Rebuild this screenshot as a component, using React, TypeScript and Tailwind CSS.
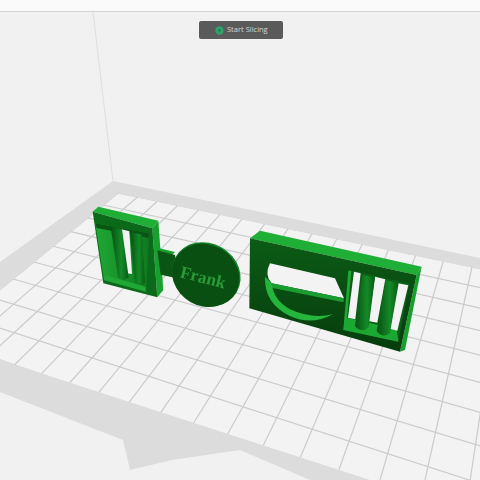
import { useMemo } from 'react';

type Pt = [number, number];

// plate corners on screen, used to work out the grid perspective
const CORNERS: [Pt, Pt, Pt, Pt] = [
  [118, 193],
  [472, 267],
  [419.5, 505],
  [-60, 339],
];

function homography([p0, p1, p2, p3]: [Pt, Pt, Pt, Pt]) {
  const dx1 = p1[0] - p2[0];
  const dx2 = p3[0] - p2[0];
  const sx = p0[0] - p1[0] + p2[0] - p3[0];
  const dy1 = p1[1] - p2[1];
  const dy2 = p3[1] - p2[1];
  const sy = p0[1] - p1[1] + p2[1] - p3[1];
  const det = dx1 * dy2 - dx2 * dy1;
  const g = (sx * dy2 - dx2 * sy) / det;
  const h = (dx1 * sy - sx * dy1) / det;
  const a = p1[0] - p0[0] + g * p1[0];
  const b = p3[0] - p0[0] + h * p3[0];
  const d = p1[1] - p0[1] + g * p1[1];
  const e = p3[1] - p0[1] + h * p3[1];
  return (u: number, v: number): Pt => {
    const w = g * u + h * v + 1;
    return [(a * u + b * v + p0[0]) / w, (d * u + e * v + p0[1]) / w];
  };
}

function Plate() {
  const lines = useMemo(() => {
    const map = homography(CORNERS);
    const out: [Pt, Pt][] = [];
    for (let i = 0; i <= 19; i++) out.push([map(i / 15, 0), map(i / 15, 1.1)]);
    for (let j = 0; j <= 9; j++) out.push([map(0, j / 9), map(1.3, j / 9)]);
    return out;
  }, []);

  return (
    <>
      <polygon points="113,181 480,258 480,480 310,480 240,450 172,460 130,470 123,440 0,392 0,262" fill="#dcdcdc" />
      <polygon points="118,193 480,269 480,480 370,480 0,360 0,290" fill="#f3f3f3" />
      <clipPath id="plate">
        <polygon points="118,193 480,269 480,480 370,480 0,360 0,290" />
      </clipPath>
      <g clipPath="url(#plate)" stroke="#cbcbcb" strokeWidth="1.2">
        {lines.map(([a, b], i) => (
          <line key={i} x1={a[0]} y1={a[1]} x2={b[0]} y2={b[1]} />
        ))}
      </g>
    </>
  );
}

function Gradients() {
  return (
    <defs>
      <linearGradient id="cyl" x1="0" y1="0" x2="1" y2="0">
        <stop offset="0" stopColor="#084f12" />
        <stop offset="0.6" stopColor="#138a27" />
        <stop offset="1" stopColor="#0a5a15" />
      </linearGradient>
      <linearGradient id="face" x1="0" y1="0" x2="0" y2="1">
        <stop offset="0" stopColor="#0b5c16" />
        <stop offset="1" stopColor="#063c0c" />
      </linearGradient>
      <linearGradient id="wall" x1="0" y1="0" x2="1" y2="0">
        <stop offset="0" stopColor="#1fa834" />
        <stop offset="1" stopColor="#0f7a20" />
      </linearGradient>
    </defs>
  );
}

function BuckleLeft() {
  return (
    <g transform="translate(80 190) scale(0.3333)">
      <polygon points="38,65 55,50 235,92 217,115" fill="#1fae36" />
      <polygon points="217,115 235,92 250,300 232,322" fill="#18a02e" />
      <polygon points="38,65 217,115 232,322 70,280" fill="#0b6a19" />
      <polygon points="46,100 207,130 198,305 72,270" fill="url(#wall)" />
      <polygon points="46,100 207,130 206,144 50,114" fill="#0a5514" />
      <polygon points="72,270 198,305 196,290 76,256" fill="#1fa836" />
      <polygon points="125,118 148,124 156,252 140,250" fill="#f3f3f3" />
      <path d="M92,110 L126,118 L146,262 Q130,278 114,262 Z" fill="url(#cyl)" />
      <path d="M150,126 L186,134 L195,278 Q180,294 164,276 Z" fill="url(#cyl)" />
      <polygon points="225,172 285,186 276,196 232,181" fill="#18a02e" />
      <polygon points="232,181 285,195 292,265 242,254" fill="#0a5414" />
      <ellipse cx="379" cy="253" rx="106" ry="93" transform="rotate(30 379 253)" fill="#118526" />
      <ellipse cx="377" cy="256" rx="104" ry="92" transform="rotate(30 377 256)" fill="#0a4f12" />
      <text
        x="298"
        y="262"
        transform="rotate(14 298 262)"
        fill="#2a9a3a"
        fontSize="52"
        fontWeight="700"
        fontFamily="'Liberation Serif', serif"
      >
        Frank
      </text>
    </g>
  );
}

function BuckleRight() {
  return (
    <g transform="translate(240 220) scale(0.3333)">
      <polygon points="30,55 60,32 545,140 530,165" fill="#1fae36" />
      <polygon points="530,165 545,140 495,390 480,395" fill="#18a02e" />
      <polygon points="30,55 530,165 480,395 28,265" fill="url(#face)" />
      {/* half round window */}
      <path d="M90,130 L285,175 L312,235 L95,190 Q72,165 90,130 Z" fill="#f3f3f3" />
      <polygon points="95,190 312,235 310,247 95,203" fill="#1a9c30" />
      <path d="M75,170 Q72,250 150,288 Q215,318 278,283 Q215,298 150,268 Q100,240 95,190 Z" fill="#25b53c" />
      {/* slots */}
      <polygon points="330,150 508,190 475,365 310,330" fill="#0c5f18" />
      <polygon points="325,152 334,152 318,328 310,330" fill="#1fa834" />
      <polygon points="322,293 470,328 475,365 310,330" fill="#1ba832" />
      <polygon points="342,155 362,160 346,298 324,293" fill="#f3f3f3" />
      <polygon points="405,170 436,178 412,308 385,303" fill="#f3f3f3" />
      <polygon points="474,190 505,196 472,332 450,326" fill="#f3f3f3" />
      <path d="M368,165 L405,172 L386,322 Q365,342 345,318 Z" fill="url(#cyl)" />
      <path d="M438,180 L476,190 L450,338 Q430,358 410,333 Z" fill="url(#cyl)" />
    </g>
  );
}

export default function App() {
  return (
    <div className="relative flex h-[480px] w-[480px] flex-col overflow-hidden bg-[#f1f1f1] font-['Open_Sans','Liberation_Sans',sans-serif]">
      <div className="h-[12px] shrink-0 border-b border-[#d4d4d4] bg-[#fafafa]" />
      <svg viewBox="0 12 480 468" className="h-[468px] w-[480px] blur-[0.5px]">
        <Gradients />
        <line x1="93" y1="12" x2="113" y2="181" stroke="#dedede" strokeWidth="1" />
        <Plate />
        <BuckleLeft />
        <BuckleRight />
      </svg>
      <div className="absolute left-[199px] top-[21px] flex h-[18px] w-[84px] items-center gap-[3px] rounded-[2px] bg-[#5a5a5a] pl-[16px]">
        <svg viewBox="0 0 10 10" className="h-[9px] w-[9px]">
          <circle cx="5" cy="5" r="4.6" fill="#2fa36b" />
          <path d="M4 3.2 L6.8 5 L4 6.8 Z" fill="#1f6b47" />
        </svg>
        <span className="text-[7.5px] leading-none text-[#d6d6d6]">Start Slicing</span>
      </div>
    </div>
  );
}
